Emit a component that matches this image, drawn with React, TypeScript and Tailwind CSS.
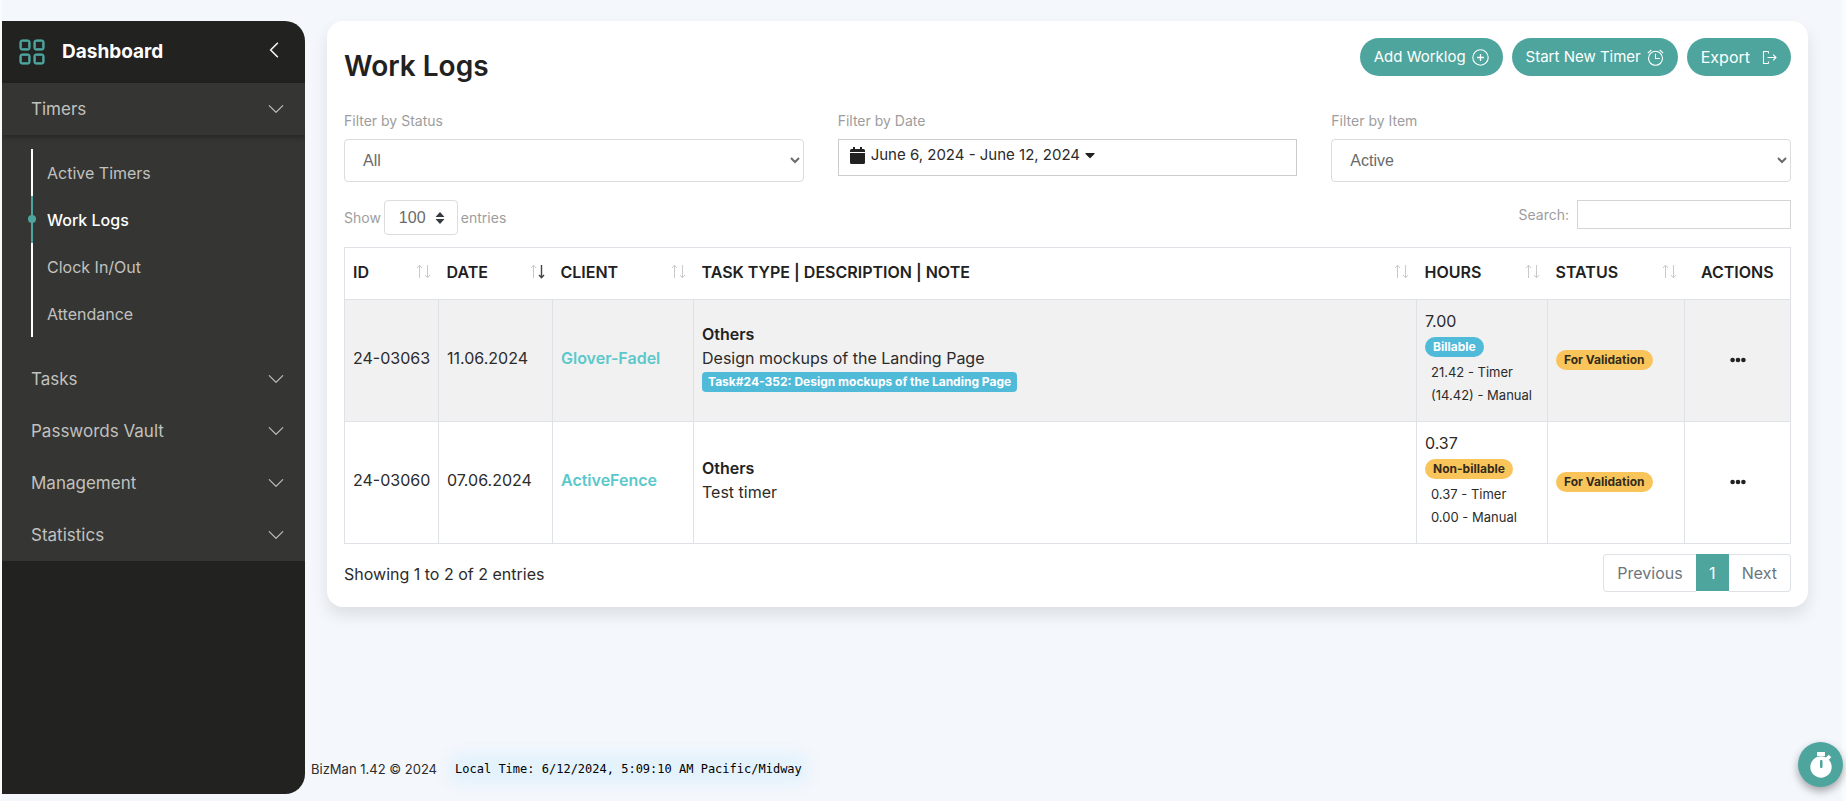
import { BsChevronDown, BsChevronLeft, BsGrid } from "react-icons/bs";
import { FaCaretDown } from "react-icons/fa";

const subItems = ["Active Timers", "Work Logs", "Clock In/Out", "Attendance"];
const menuItems = ["Tasks", "Passwords Vault", "Management", "Statistics"];

const columns = [
  { label: "ID", width: "w-[94px]", sort: "none" },
  { label: "DATE", width: "w-[114px]", sort: "desc" },
  { label: "CLIENT", width: "w-[141px]", sort: "none" },
  { label: "TASK TYPE | DESCRIPTION | NOTE", width: "", sort: "none" },
  { label: "HOURS", width: "w-[131px]", sort: "none" },
  { label: "STATUS", width: "w-[137px]", sort: "none" },
];

const logs = [
  {
    id: "24-03063",
    date: "11.06.2024",
    client: "Glover-Fadel",
    description: "Design mockups of the Landing Page",
    task: "Task#24-352: Design mockups of the Landing Page",
    hours: "7.00",
    billable: true,
    timer: "21.42 - Timer",
    manual: "(14.42) - Manual",
  },
  {
    id: "24-03060",
    date: "07.06.2024",
    client: "ActiveFence",
    description: "Test timer",
    task: "",
    hours: "0.37",
    billable: false,
    timer: "0.37 - Timer",
    manual: "0.00 - Manual",
  },
];

function SortIcon({ active }: { active: boolean }) {
  return (
    <svg width="15" height="15" viewBox="0 0 15 15" fill="none" className="shrink-0">
      <path d="M3.5 14V1.5M1 4l2.5-2.8L6 4" stroke="#c9c9c9" />
      <path d="M11.5 1v12.5M9 11l2.5 2.8L14 11" stroke={active ? "#444" : "#c9c9c9"} strokeWidth={active ? 1.4 : 1} />
    </svg>
  );
}

function PlusCircleIcon() {
  return (
    <svg width="17" height="17" viewBox="0 0 17 17" fill="none" stroke="currentColor" strokeWidth="1.1">
      <circle cx="8.500" cy="8.500" r="7.700" />
      <path d="M8.5 5v7M5 8.500h7" strokeWidth="1.300" />
    </svg>
  );
}

function AlarmIcon() {
  return (
    <svg width="17" height="17" viewBox="0 0 17 17" fill="none" stroke="currentColor" strokeWidth="1.1">
      <circle cx="8.500" cy="9.300" r="7" />
      <path d="M8.500 4.800v4.700h4.300M.8 4.200L4.300 1M12.700 1l3.500 3.200" />
    </svg>
  );
}

function ExportIcon() {
  return (
    <svg width="15" height="15" viewBox="0 0 15 15" fill="none" stroke="currentColor" strokeWidth="1.1">
      <path d="M6.5 1.5h-5v12h5M6.5 1.5v2M6.5 11.5v2M5.500 7.5h8.500M11.2 4.7l2.800 2.8-2.800 2.8" />
    </svg>
  );
}

function CalendarIcon() {
  return (
    <svg width="15" height="17" viewBox="0 0 15 17" fill="#212121">
      <path d="M3 0h2v2h5V0h2v2h1.5A1.5 1.5 0 0 1 15 3.500V5H0V3.500A1.500 1.500 0 0 1 1.500 2H3zM0 6h15v9.500a1.500 1.500 0 0 1-1.500 1.500h-12A1.500 1.500 0 0 1 0 15.500z" />
    </svg>
  );
}

function DotsIcon() {
  return (
    <svg width="16" height="6" viewBox="0 0 16 6" fill="currentColor">
      <circle cx="2.600" cy="3" r="2.300" />
      <circle cx="8" cy="3" r="2.300" />
      <circle cx="13.400" cy="3" r="2.300" />
    </svg>
  );
}

function StopwatchIcon() {
  return (
    <svg width="24" height="26" viewBox="0 0 24 26">
      <rect x="8" y="0" width="8" height="4" fill="#fff" />
      <path d="M18 7l3-3" stroke="#fff" strokeWidth="3.500" />
      <circle cx="12" cy="15" r="10.700" fill="#fff" />
      <rect x="11" y="8" width="2.500" height="8" rx="1" fill="#4ea59d" />
    </svg>
  );
}

function Sidebar() {
  return (
    <aside className="mt-[21px] mb-[7px] w-[303px] shrink-0 overflow-hidden rounded-r-[20px] bg-[#222220] text-[#c1c1bf]">
      <div className="flex h-[62px] items-center justify-between pr-[22px] pl-4">
        <div className="flex items-center gap-4">
          <BsGrid className="size-7 stroke-[0.4] text-[#4ea59d]" />
          <span className="text-[19px] font-bold text-white">Dashboard</span>
        </div>
        <button type="button" aria-label="Collapse sidebar" className="pb-1 text-white">
          <BsChevronLeft className="size-[18px] stroke-[0.4]" />
        </button>
      </div>
      <nav className="bg-[#353533]">
        <button type="button" className="flex h-[52px] w-full items-center justify-between pr-5 pl-[29px] text-[17px] shadow-[0_2px_5px_rgba(0,0,0,0.3)]">
          Timers
          <BsChevronDown className="size-[18px]" />
        </button>
        <ul className="pt-[14px] pb-4 pl-[29px]">
          {subItems.map((item) => {
            const active = item === "Work Logs";
            return (
              <li key={item} className={active ? "relative border-l-2 border-[#4ea59d]" : "border-l-2 border-white"}>
                {active && <span className="absolute top-[19px] left-[-5px] size-2 rounded-full bg-[#4ea59d]" />}
                <a href="#" className={active ? "flex h-[47px] items-center pl-[14px] font-medium text-white" : "flex h-[47px] items-center pl-[14px]"}>
                  {item}
                </a>
              </li>
            );
          })}
        </ul>
        {menuItems.map((item) => (
          <button key={item} type="button" className="flex h-[52px] w-full items-center justify-between pr-5 pl-[29px] text-[17px]">
            {item}
            <BsChevronDown className="size-[18px]" />
          </button>
        ))}
      </nav>
    </aside>
  );
}

export default function App() {
  const pill = "flex h-[38px] items-center rounded-full bg-[#4ea59d] px-[14px] text-white";
  const label = "mb-2 block text-sm leading-5 text-[#9d9d9d]";
  const select = "h-[43px] w-full rounded border border-[#dcdcdc] bg-white px-[14px] font-['Liberation_Sans',sans-serif] text-[#6a6a6a]";
  const badge = "inline-flex h-5 items-center rounded-full px-2 text-xs font-bold";

  return (
    <div className="flex min-h-screen border-r-4 border-l-2 border-[#fafbfc] bg-[#f4f7fc] font-['Inter',sans-serif] text-base leading-6 text-[#2b2b2b]">
      <Sidebar />
      <div className="flex min-w-0 flex-1 flex-col">
        <main className="mt-[21px] mr-[34px] ml-[22px] rounded-2xl bg-white px-[17px] pt-[17px] pb-[15px] shadow-[0_8px_16px_rgba(0,0,0,0.1)]">
          <header className="flex items-start justify-between">
            <h1 className="mt-[7px] text-[28px] leading-[42px] font-semibold text-[#212121]">Work Logs</h1>
            <div className="flex gap-[9px]">
              <button type="button" className={`${pill} gap-[6px] text-[15px]`}>
                Add Worklog <PlusCircleIcon />
              </button>
              <button type="button" className={`${pill} gap-[6px] text-[15px]`}>
                Start New Timer <AlarmIcon />
              </button>
              <button type="button" className={`${pill} gap-3 text-base`}>
                Export <ExportIcon />
              </button>
            </div>
          </header>

          <div className="mt-6 grid grid-cols-3 gap-[34px]">
            <div>
              <label htmlFor="status" className={label}>Filter by Status</label>
              <select id="status" className={select}>
                <option>All</option>
              </select>
            </div>
            <div>
              <label htmlFor="date" className={label}>Filter by Date</label>
              <button id="date" type="button" className="flex h-[37px] w-full items-start border border-[#ccc] px-[11px] pt-[3px] text-[15px]">
                <span className="flex h-6 items-center gap-[6px]">
                  <CalendarIcon />
                  June 6, 2024 - June 12, 2024
                  <FaCaretDown className="-ml-1 size-4 text-[#212121]" />
                </span>
              </button>
            </div>
            <div>
              <label htmlFor="item" className={label}>Filter by Item</label>
              <select id="item" className={select}>
                <option>Active</option>
              </select>
            </div>
          </div>

          <div className="mt-[18px] flex items-start justify-between text-sm text-[#9d9d9d]">
            <label className="flex items-center gap-[3px]">
              Show
              <span className="relative">
                <select className="h-[35px] w-[74px] appearance-none rounded border border-[#dcdcdc] bg-white pl-[14px] font-['Liberation_Sans',sans-serif] text-base text-[#6a6a6a]">
                  <option>100</option>
                </select>
                <svg width="10" height="12" viewBox="0 0 10 12" fill="#343a40" className="pointer-events-none absolute top-3 right-[13px]">
                  <path d="M5 0l4.500 5h-9zM5 12L.5 7h9z" />
                </svg>
              </span>
              entries
            </label>
            <label className="flex items-center gap-2">
              Search:
              <input type="search" className="h-[29px] w-[214px] border border-[#d5d5d5] px-2" />
            </label>
          </div>

          <table className="mt-3 w-full table-fixed border-collapse border border-[#dee2e6]">
            <thead>
              <tr className="h-[52px]">
                {columns.map((column) => (
                  <th key={column.label} className={`${column.width} px-2 pb-1 text-left font-semibold whitespace-nowrap text-[#212121]`}>
                    <span className="flex items-center justify-between">
                      {column.label}
                      <SortIcon active={column.sort === "desc"} />
                    </span>
                  </th>
                ))}
                <th className="w-[106px] pb-1 text-center font-semibold text-[#212121]">ACTIONS</th>
              </tr>
            </thead>
            <tbody>
              {logs.map((log) => (
                <tr key={log.id} className="h-[122px] odd:bg-[#f1f1f1] *:border *:border-[#dee2e6] *:px-2 *:pb-[5px]">
                  <td className="whitespace-nowrap">{log.id}</td>
                  <td className="whitespace-nowrap">{log.date}</td>
                  <td>
                    <a href="#" className="font-semibold text-[#5bc8cb]">{log.client}</a>
                  </td>
                  <td>
                    <div className="font-semibold text-[#212121]">Others</div>
                    <div>{log.description}</div>
                    {log.task && (
                      <div className="flex h-6 items-center">
                        <span className="flex h-5 items-center rounded bg-[#50bad9] px-[6px] text-xs font-bold text-white">{log.task}</span>
                      </div>
                    )}
                  </td>
                  <td className="whitespace-nowrap">
                    <div>{log.hours}</div>
                    <div className="flex h-7 items-center">
                      <span className={log.billable ? `${badge} bg-[#50bad9] text-white` : `${badge} bg-[#f9c55b] text-[#332b1a]`}>
                        {log.billable ? "Billable" : "Non-billable"}
                      </span>
                    </div>
                    <div className="pl-[6px] text-[13px] leading-[22px]">{log.timer}</div>
                    <div className="pl-[6px] text-[13px] leading-6">{log.manual}</div>
                  </td>
                  <td>
                    <span className={`${badge} bg-[#f9c55b] text-[#332b1a]`}>For Validation</span>
                  </td>
                  <td className="text-center">
                    <button type="button" aria-label="Row actions" className="align-middle text-[#212121]">
                      <DotsIcon />
                    </button>
                  </td>
                </tr>
              ))}
            </tbody>
          </table>

          <div className="mt-[10px] flex items-start justify-between">
            <p className="mt-2">Showing 1 to 2 of 2 entries</p>
            <nav aria-label="Pagination" className="flex items-start text-[#6c757d]">
              <button type="button" className="h-[38px] rounded-l border border-r-0 border-[#dee2e6] px-[13px]">Previous</button>
              <button type="button" className="h-[37px] w-[33px] bg-[#4ea59d] text-white">1</button>
              <button type="button" className="h-[38px] rounded-r border border-l-0 border-[#dee2e6] px-[13px]">Next</button>
            </nav>
          </div>
        </main>
        <footer className="mt-auto mb-5 flex items-center gap-[18px] pl-[6px] text-[13px]">
          <span>BizMan 1.42 © 2024</span>
          <span className="rounded-full bg-[#e4f2fc] font-['DejaVu_Sans_Mono',monospace] text-xs leading-4 text-black shadow-[0_0_14px_8px_#e4f2fc]">
            Local Time: 6/12/2024, 5:09:10 AM Pacific/Midway
          </span>
        </footer>
      </div>
      <button type="button" aria-label="Timer" className="fixed right-[3px] bottom-[14px] flex size-[45px] items-center justify-center rounded-full bg-[#4ea59d] shadow-[0_4px_8px_rgba(0,0,0,0.35)]">
        <StopwatchIcon />
      </button>
    </div>
  );
}
